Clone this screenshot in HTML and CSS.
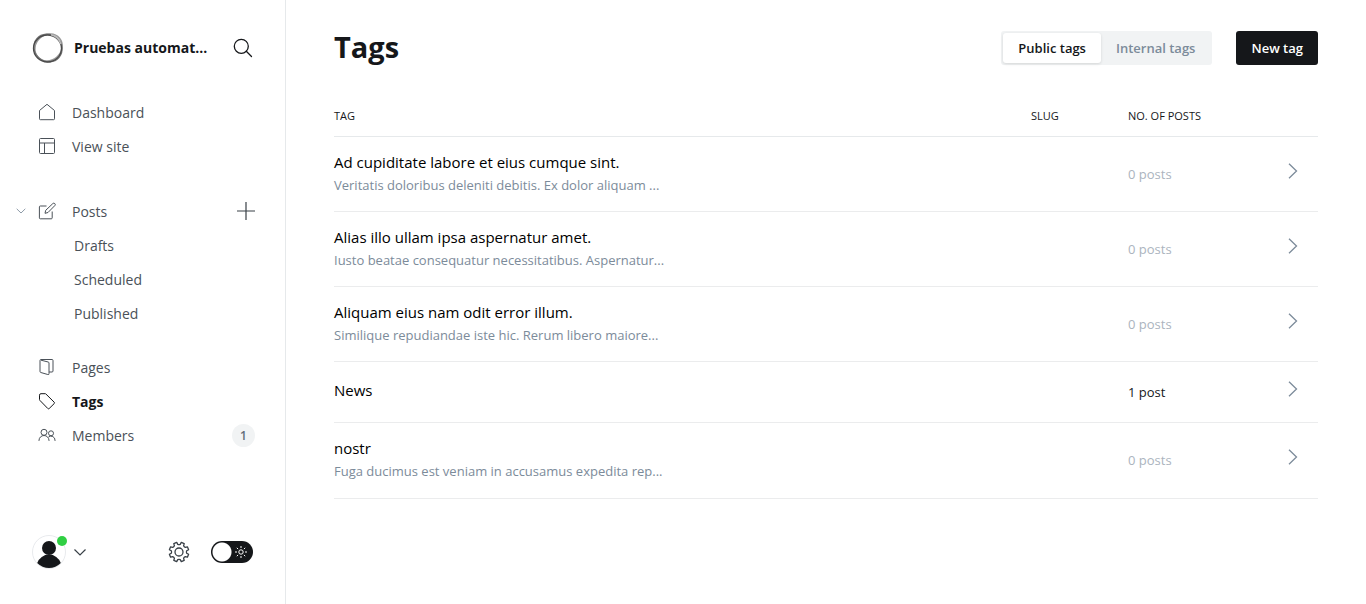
FILE: index.html
```html
<!DOCTYPE html>
<html lang="en">
<head>
<meta charset="utf-8">
<meta name="viewport" content="width=device-width, initial-scale=1">
<title>Tags</title>
<link rel="stylesheet" href="styles.css">
</head>
<body>
<div class="app">
  <aside class="sidebar">
    <header class="site">
      <svg class="site-logo" viewBox="0 0 32 32" fill="none" aria-hidden="true">
        <ellipse cx="16.500" cy="15.500" rx="14.300" ry="12.800" stroke="#999" stroke-width="1.600" transform="rotate(-40 16.500 15.500)"/>
        <ellipse cx="16" cy="16" rx="14.600" ry="13.300" stroke="#777" stroke-width="1.200" transform="rotate(40 16 16)"/>
        <ellipse cx="15.500" cy="16.500" rx="14" ry="13.500" stroke="#4a4a4a" stroke-width="1.300"/>
        <path d="M19 2.800c4 .6 8.500 4 9.800 9.200" stroke="#bbb" stroke-width="1.500"/>
      </svg>
      <span class="site-name">Pruebas automat...</span>
      <button class="icon-button search" type="button" aria-label="Search">
        <svg width="20" height="20" viewBox="0 0 20 20" fill="none" stroke="#15171a" stroke-width="1.300" stroke-linecap="round"><circle cx="8.300" cy="8.300" r="7"/><path d="M13.300 13.300L18.500 18.500"/></svg>
      </button>
    </header>
    <nav class="nav" aria-label="Main">
      <ul class="nav-group first">
        <li><a href="#"><svg class="icon" viewBox="0 0 18 18"><path d="M1.500 7.500L9 1.300l7.500 6.200v8.300a.9.900 0 0 1-.9.900H2.400a.9.900 0 0 1-.9-.9z"/></svg>Dashboard</a></li>
        <li><a href="#"><svg class="icon" viewBox="0 0 18 18"><rect x="1.500" y="1.500" width="15" height="15" rx="1"/><path d="M1.500 6h15M6.500 6v10.500"/></svg>View site</a></li>
      </ul>
      <ul class="nav-group second">
        <li>
          <button class="icon-button toggle" type="button" aria-label="Collapse posts"><svg width="10" height="10" viewBox="0 0 10 10" fill="none" stroke="#8e9ba8"><path d="M.7 2.800L5 7l4.300-4.200"/></svg></button>
          <a href="#"><svg class="icon" viewBox="0 0 18 18"><path d="M8.500 4H2.300a.9.900 0 0 0-.9.900v11a.9.900 0 0 0 .9.900h11a.9.900 0 0 0 .9-.9V9.500M7 11.300l.7-3L14.800 1.600a1.300 1.300 0 0 1 2 2L10 10.500z"/></svg>Posts</a>
          <button class="icon-button add" type="button" aria-label="New post"><svg width="18" height="18" viewBox="0 0 18 18" stroke="#394047" stroke-width="1.200"><path d="M9 0v18M0 9h18"/></svg></button>
        </li>
        <li class="sub"><a href="#">Drafts</a></li>
        <li class="sub"><a href="#">Scheduled</a></li>
        <li class="sub"><a href="#">Published</a></li>
      </ul>
      <ul class="nav-group">
        <li><a href="#"><svg class="icon" viewBox="0 0 18 18"><path d="M2 2.500v11a1 1 0 0 0 .8 1l7 2a.9.900 0 0 0 1.200-.9V5a1 1 0 0 0-.8-1L3 2.200M2 2.500a1 1 0 0 1 1-1h11a1 1 0 0 1 1 1V13a1 1 0 0 1-1 1h-3"/></svg>Pages</a></li>
        <li><a class="active" href="#" aria-current="page"><svg class="icon" viewBox="0 0 18 18"><path d="M1.500 3.200a1.500 1.500 0 0 1 1.500-1.500h4.200a1 1 0 0 1 .7.300l8.300 8.200a1 1 0 0 1 0 1.400l-5 4.900a1 1 0 0 1-1.400 0L1.800 8.300a1 1 0 0 1-.3-.7z"/></svg>Tags</a></li>
        <li><a href="#"><svg class="icon" viewBox="0 0 18 18"><circle cx="6" cy="6.300" r="3"/><circle cx="13" cy="7.300" r="2.500"/><path d="M1 15v-.5a5 5 0 0 1 10 0v.5M10.500 11a4 4 0 0 1 6.500 3.300v.7"/></svg>Members<span class="count">1</span></a></li>
      </ul>
    </nav>
    <footer class="account">
      <button class="icon-button user" type="button" aria-label="Account menu">
        <span class="avatar">
          <svg width="34" height="34" viewBox="0 0 34 34"><circle cx="17" cy="17" r="16.500" fill="#fff" stroke="#e8eaed"/><circle cx="17" cy="13" r="7" fill="#15171a"/><path d="M5.200 28a12.500 12.500 0 0 1 23.600 0A16.500 16.500 0 0 1 5.200 28z" fill="#15171a"/></svg>
          <span class="status"></span>
        </span>
        <svg width="12" height="12" viewBox="0 0 12 12" fill="none" stroke="#394047" stroke-width="1.200"><path d="M.5 3.500L6 9l5.500-5.500"/></svg>
      </button>
      <a class="settings" href="#" aria-label="Settings"><svg width="22" height="22" viewBox="0 0 22 22" fill="none" stroke="#394047" stroke-width="1.300" stroke-linejoin="round"><circle cx="11" cy="11" r="4"/><path d="M9.800 3.300Q11 3.900 12.200 3.300L13.300 1.400 16.200 2.600 15.600 4.700Q16.100 5.900 17.300 6.400L19.400 5.800 20.600 8.700 18.700 9.800Q18.100 11 18.700 12.200L20.600 13.300 19.400 16.200 17.300 15.600Q16.100 16.100 15.600 17.300L16.200 19.400 13.300 20.600 12.200 18.700Q11 18.100 9.800 18.700L8.700 20.600 5.800 19.400 6.400 17.300Q5.900 16.100 4.700 15.600L2.600 16.200 1.400 13.300 3.300 12.200Q3.900 11 3.300 9.800L1.400 8.700 2.600 5.800 4.700 6.400Q5.900 5.900 6.400 4.700L5.800 2.600 8.700 1.400z"/></svg></a>
      <label class="switch">
        <input type="checkbox" aria-label="Night mode">
        <svg width="12" height="12" viewBox="0 0 12 12" fill="none" stroke="#fff" stroke-width="1"><circle cx="6" cy="6" r="2.200"/><path d="M6 0v2M6 10v2M0 6h2M10 6h2M1.800 1.800l1.300 1.300M8.900 8.900l1.300 1.300M10.200 1.800L8.900 3.100M3.100 8.900l-1.300 1.300"/></svg>
      </label>
    </footer>
  </aside>
  <main class="main">
    <header class="page-head">
      <h1>Tags</h1>
      <div class="segment">
        <button class="selected" type="button" aria-pressed="true">Public tags</button>
        <button type="button" aria-pressed="false">Internal tags</button>
      </div>
      <a class="primary" href="#">New tag</a>
    </header>
    <table class="tags">
      <colgroup><col><col class="col-slug"><col class="col-posts"><col class="col-arrow"></colgroup>
      <thead><tr><th scope="col">TAG</th><th scope="col">SLUG</th><th scope="col">NO. OF POSTS</th><td></td></tr></thead>
      <tbody>
        <tr><td><h3>Ad cupiditate labore et eius cumque sint.</h3><p>Veritatis doloribus deleniti debitis. Ex dolor aliquam ...</p></td><td></td><td class="posts">0 posts</td><td><a class="arrow" href="#" aria-label="Edit tag"><svg width="10" height="16" viewBox="0 0 10 16"><path d="M1 .8L8.500 8 1 15.200"/></svg></a></td></tr>
        <tr><td><h3>Alias illo ullam ipsa aspernatur amet.</h3><p>Iusto beatae consequatur necessitatibus. Aspernatur...</p></td><td></td><td class="posts">0 posts</td><td><a class="arrow" href="#" aria-label="Edit tag"><svg width="10" height="16" viewBox="0 0 10 16"><path d="M1 .8L8.500 8 1 15.200"/></svg></a></td></tr>
        <tr><td><h3>Aliquam eius nam odit error illum.</h3><p>Similique repudiandae iste hic. Rerum libero maiore...</p></td><td></td><td class="posts">0 posts</td><td><a class="arrow" href="#" aria-label="Edit tag"><svg width="10" height="16" viewBox="0 0 10 16"><path d="M1 .8L8.500 8 1 15.200"/></svg></a></td></tr>
        <tr class="short"><td><h3>News</h3></td><td></td><td class="posts some">1 post</td><td><a class="arrow" href="#" aria-label="Edit tag"><svg width="10" height="16" viewBox="0 0 10 16"><path d="M1 .8L8.500 8 1 15.200"/></svg></a></td></tr>
        <tr><td><h3>nostr</h3><p>Fuga ducimus est veniam in accusamus expedita rep...</p></td><td></td><td class="posts">0 posts</td><td><a class="arrow" href="#" aria-label="Edit tag"><svg width="10" height="16" viewBox="0 0 10 16"><path d="M1 .8L8.500 8 1 15.200"/></svg></a></td></tr>
      </tbody>
    </table>
  </main>
</div>
</body>
</html>
```
FILE: styles.css
```css
* { box-sizing: border-box; }
body {
  margin: 0;
  background: #fff;
  color: #15171a;
  font-family: "Open Sans", "Noto Sans", sans-serif;
  font-size: 14px;
}
a { color: inherit; text-decoration: none; }
h1, h3, p, ul { margin: 0; padding: 0; }
ul { list-style: none; }
button { font: inherit; border: 0; cursor: pointer; }
svg { display: block; flex: none; }
.app { display: flex; min-height: 100vh; }

.sidebar {
  display: flex;
  flex-direction: column;
  flex: none;
  width: 286px;
  padding: 32px 32px 35px;
  border-right: 1px solid #e6e9eb;
}
.icon-button { display: flex; align-items: center; padding: 0; background: none; }
.site { display: flex; align-items: center; height: 32px; }
.site-logo { width: 32px; height: 32px; }
.site-name {
  flex: 1;
  margin-left: 10px;
  padding-bottom: 2px;
  white-space: nowrap;
  font-weight: 700;
}
.nav { flex: 1; padding-top: 31px; color: #4a5158; }
.nav-group.first { margin-bottom: 31px; }
.nav-group.second { margin-bottom: 20px; }
.nav li { position: relative; display: flex; align-items: center; height: 34px; }
.nav a { display: flex; flex: 1; align-items: center; gap: 16px; padding-left: 6px; }
.nav .sub a { padding-left: 42px; }
.nav .active { color: #15171a; font-weight: 700; }
.icon { width: 18px; height: 18px; fill: none; stroke: currentColor; stroke-width: 1; stroke-linejoin: round; }
.toggle { position: absolute; left: -16px; }
.add, .count { margin-right: -2px; }
.count {
  width: 23px;
  margin-left: auto;
  border-radius: 12px;
  background: #f1f3f4;
  color: #626d79;
  font-size: 12px;
  font-weight: 600;
  line-height: 23px;
  text-align: center;
}
.account { display: flex; align-items: center; gap: 21px; height: 34px; }
.user { gap: 8px; margin-right: auto; }
.avatar { position: relative; }
.status { position: absolute; top: 1px; right: -1px; width: 10px; height: 10px; border-radius: 5px; background: #30cf43; }
.switch { position: relative; display: flex; cursor: pointer; }
.switch input {
  appearance: none;
  width: 42px;
  height: 22px;
  margin: 0;
  border-radius: 11px;
  background: radial-gradient(circle at 11px 11px, #fff 9px, #15171a 10px);
}
.switch svg { position: absolute; top: 5px; right: 6px; }

.main { flex: 1; min-width: 0; padding: 24px 48px; }
.page-head { display: flex; align-items: center; height: 48px; }
h1 { flex: 1; padding-bottom: 2px; font-size: 29px; line-height: 40px; font-weight: 700; }
.segment { display: flex; padding: 2px; margin-right: 24px; border-radius: 3px; background: #f1f3f4; }
.segment button {
  height: 30px;
  padding: 0 15px;
  border-radius: 3px;
  background: none;
  color: #7c8b9a;
  font-size: 13px;
  font-weight: 600;
}
.segment .selected { background: #fff; color: #15171a; box-shadow: 0 1px 3px rgba(0, 0, 0, .12); }
.primary {
  padding: 0 15px;
  border-radius: 3px;
  background: #15171a;
  color: #fff;
  font-size: 13px;
  font-weight: 600;
  line-height: 34px;
}
.tags { width: 100%; margin-top: 23px; table-layout: fixed; border-collapse: collapse; }
.col-slug { width: 97px; }
.col-posts { width: 160px; }
.col-arrow { width: 30px; }
th { padding: 0; font-size: 11px; font-weight: 400; text-align: left; }
td { height: 75px; padding: 0; border-bottom: 1px solid #ebeced; }
thead th, thead td { height: 41px; border-bottom: 1px solid #e6e9eb; }
.short td { height: 61px; }
tbody tr:last-child td { height: 76px; }
h3 { color: #000; font-size: 15px; font-weight: 500; line-height: 23px; }
.short h3 { padding-bottom: 2px; }
td p { color: #7c8b9a; font-size: 13px; line-height: 23px; }
.posts { color: #abb4be; font-size: 13px; }
.posts.some { color: #15171a; }
.arrow { display: block; width: 10px; padding-bottom: 6px; }
.arrow path { fill: none; stroke: #7c8b9a; stroke-width: 1.3; }
```
